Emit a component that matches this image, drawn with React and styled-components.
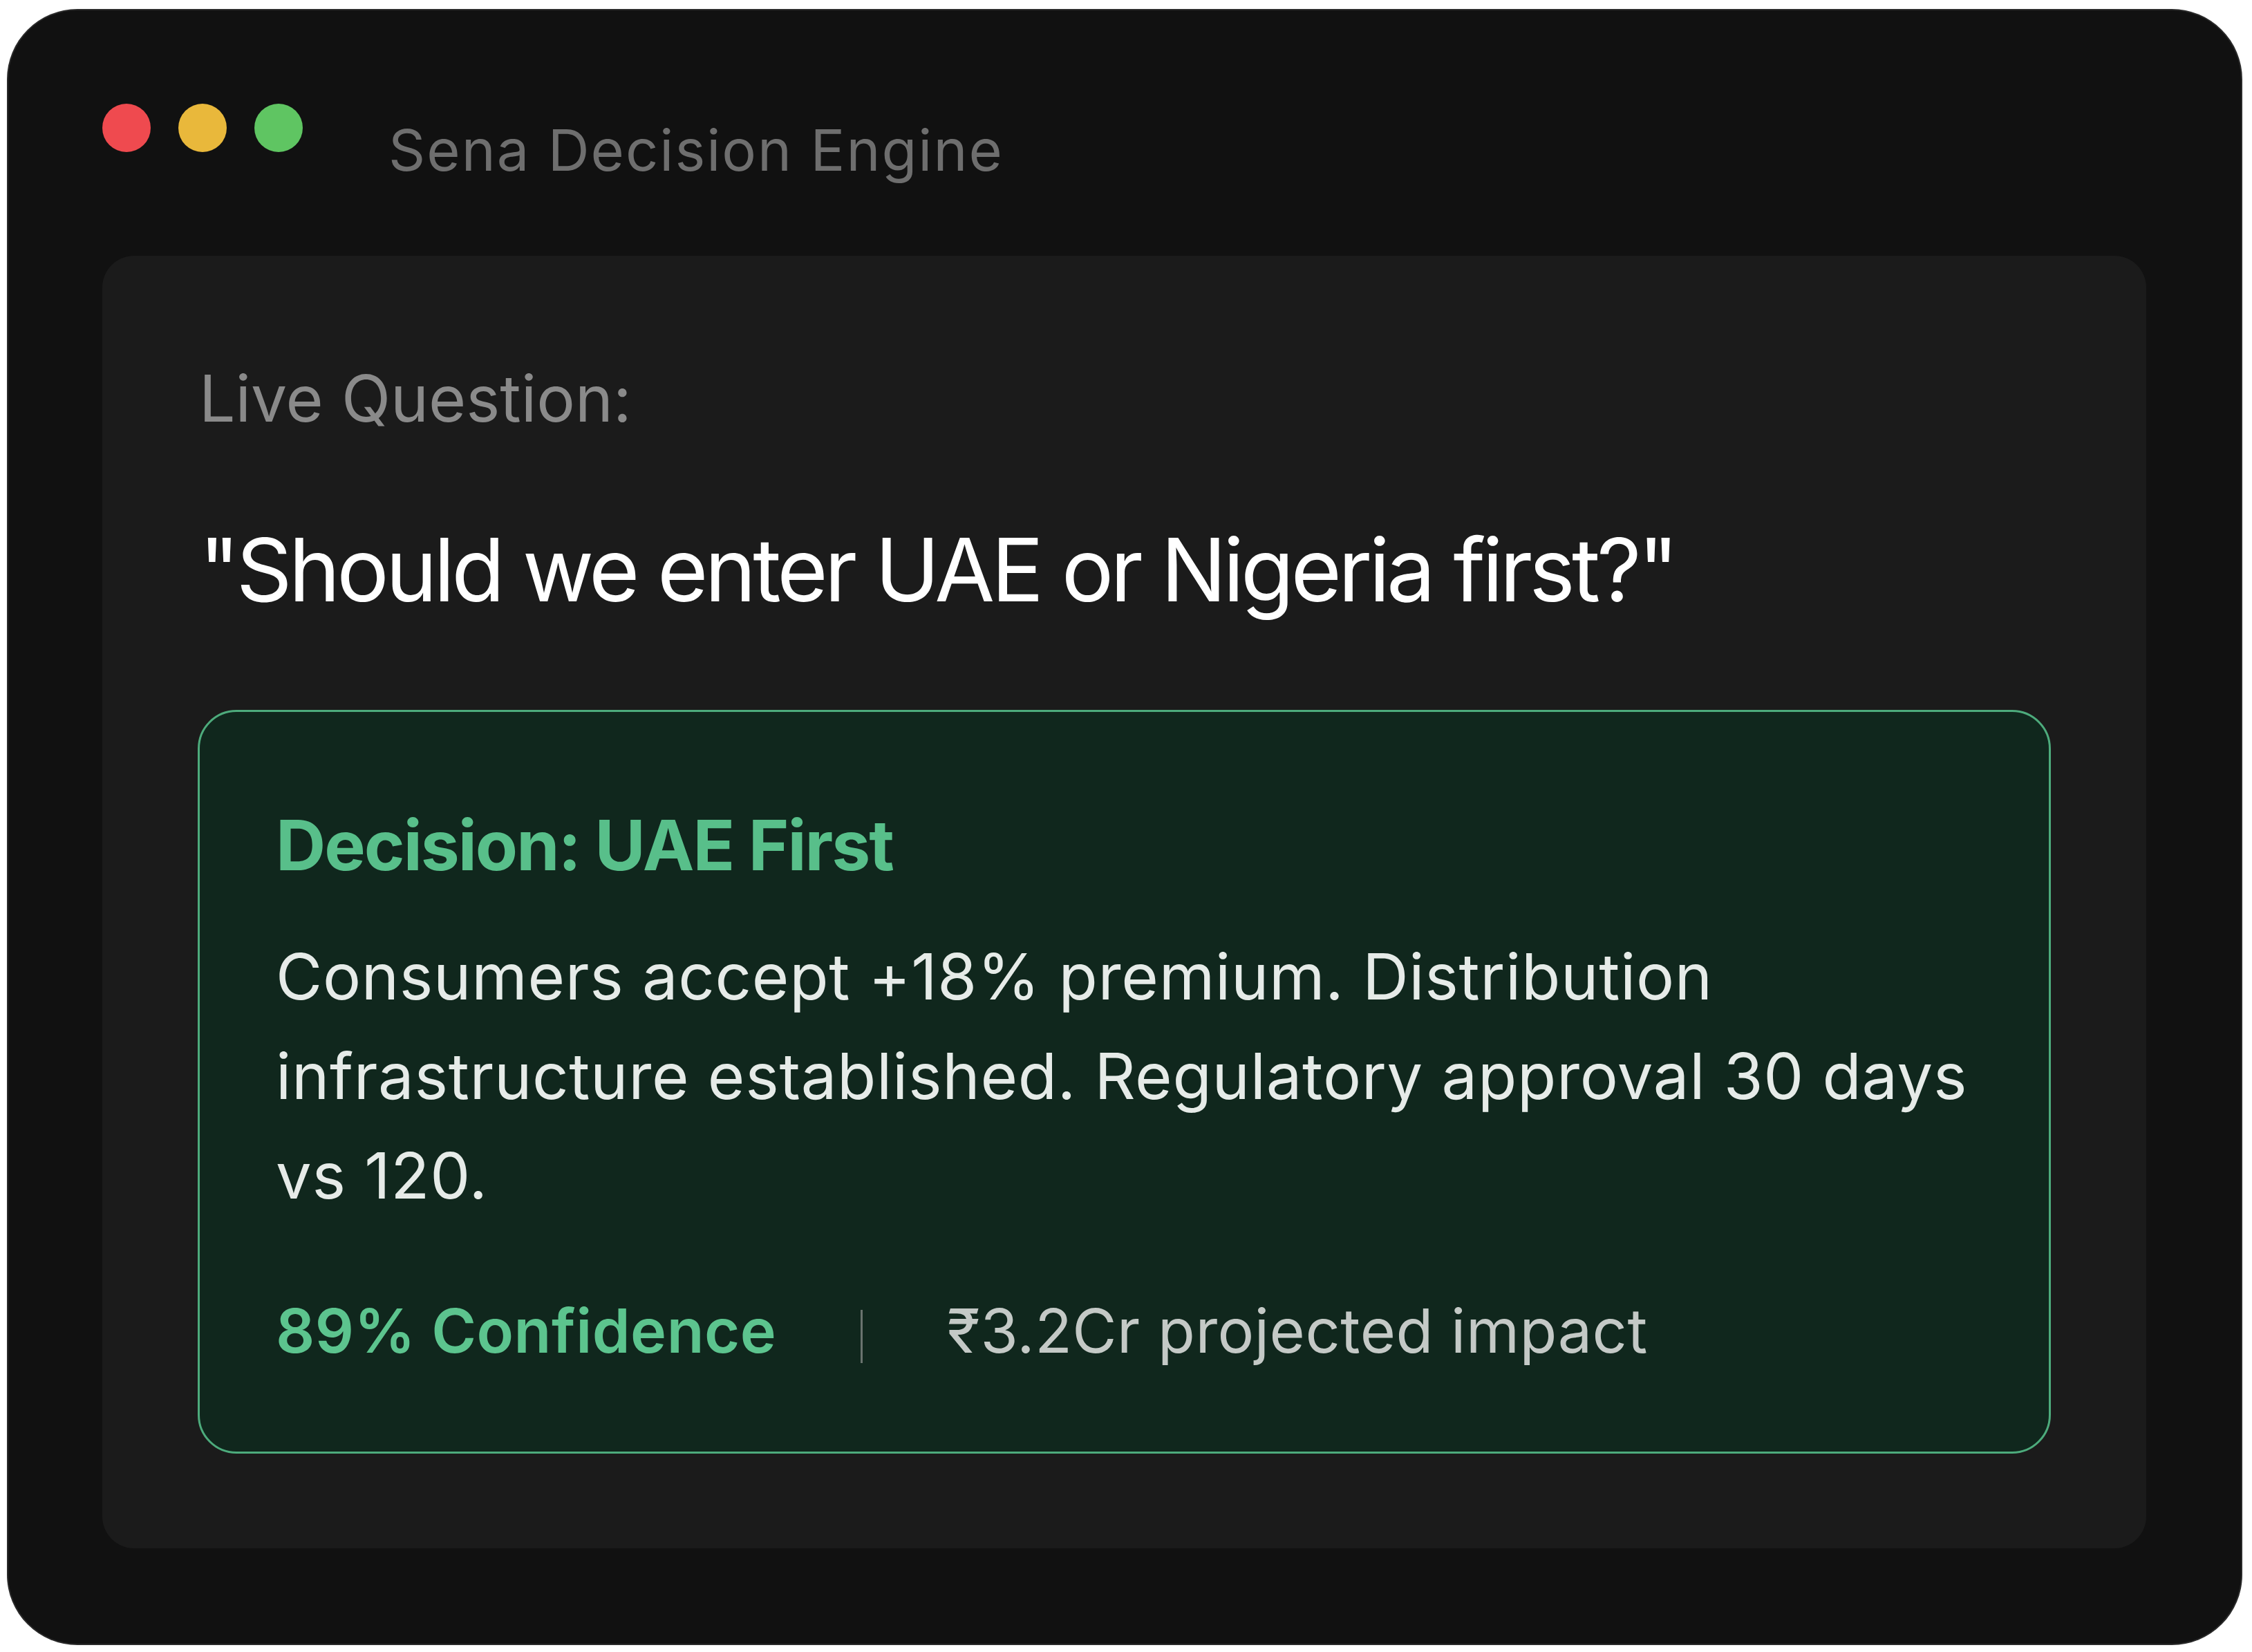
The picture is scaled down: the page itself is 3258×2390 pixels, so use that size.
import styled, { createGlobalStyle } from "styled-components";

const GlobalStyle = createGlobalStyle`
  html, body {
    margin: 0;
    padding: 0;
    background: #ffffff;
  }

  body {
    font-family: Inter, "Noto Sans", "Liberation Sans", sans-serif;
    -webkit-font-smoothing: antialiased;
  }
`;

const Page = styled.div`
  padding: 15px 16px 12px 12px;
`;

const Window = styled.div`
  background: #111111;
  border-radius: 100px;
  box-shadow: 0 0 0 2px #2a2a2a, 0 -1px 2px rgba(0, 0, 0, 0.35);
  padding: 0 137px 138px 136px;
  display: flex;
  flex-direction: column;
`;

const TitleBar = styled.div`
  height: 355px;
  display: flex;
  align-items: flex-start;
`;

const Dots = styled.div`
  display: flex;
  gap: 40px;
  margin-top: 135px;
`;

const Dot = styled.span`
  width: 70px;
  height: 70px;
  border-radius: 50%;
  background: ${(p) => p.color};
`;

const Title = styled.h1`
  margin: 152px 0 0 124px;
  font-size: 83px;
  line-height: 100px;
  font-weight: 400;
  color: #6e6e6e;
  letter-spacing: 2px;
`;

const Panel = styled.div`
  background: #1b1b1b;
  border-radius: 46px;
  padding: 150px 138px 137px;
  display: flex;
  flex-direction: column;
`;

const Label = styled.div`
  font-size: 93px;
  line-height: 112px;
  color: #8a8a8a;
  padding-left: 2px;
`;

const Question = styled.div`
  margin-top: 117px;
  font-size: 126px;
  line-height: 151px;
  color: #ffffff;
  padding-left: 2px;
  letter-spacing: -4.9px;
`;

const DecisionCard = styled.div`
  margin-top: 127px;
  background: #10271d;
  border: 3px solid #4dab7c;
  border-radius: 56px;
  padding: 133px 100px 122px 110px;
  display: flex;
  flex-direction: column;
`;

const Heading = styled.h2`
  margin: 0;
  font-size: 100px;
  line-height: 120px;
  font-weight: 700;
  letter-spacing: -2px;
  color: #58bf8a;
`;

const Body = styled.p`
  margin: 58px 0 0;
  font-size: 92px;
  line-height: 144px;
  color: #e6ebe8;
  letter-spacing: 0.7px;
`;

const Footer = styled.div`
  margin-top: 99px;
  display: flex;
  align-items: center;
  gap: 122px;
  font-size: 88px;
  line-height: 106px;
`;

const Stat = styled.span`
  color: ${(p) => p.color};
  font-weight: ${(p) => p.weight || 400};
  letter-spacing: 0.5px;
`;

const Divider = styled.span`
  width: 3px;
  height: 77px;
  margin-top: 16px;
  background: #6a736e;
`;

export default function App() {
  return (
    <>
      <GlobalStyle />
      <Page>
        <Window>
          <TitleBar>
            <Dots>
              <Dot color="#ef4a4f" />
              <Dot color="#e9b83b" />
              <Dot color="#5fc562" />
            </Dots>
            <Title>Sena Decision Engine</Title>
          </TitleBar>
          <Panel>
            <Label>Live Question:</Label>
            <Question>"Should we enter UAE or Nigeria first?"</Question>
            <DecisionCard>
              <Heading>Decision: UAE First</Heading>
              <Body>
                Consumers accept +18% premium. Distribution infrastructure
                established. Regulatory approval 30 days vs 120.
              </Body>
              <Footer>
                <Stat color="#5cc48e" weight={600}>
                  89% Confidence
                </Stat>
                <Divider />
                <Stat color="#c4c9c6">₹3.2Cr projected impact</Stat>
              </Footer>
            </DecisionCard>
          </Panel>
        </Window>
      </Page>
    </>
  );
}
